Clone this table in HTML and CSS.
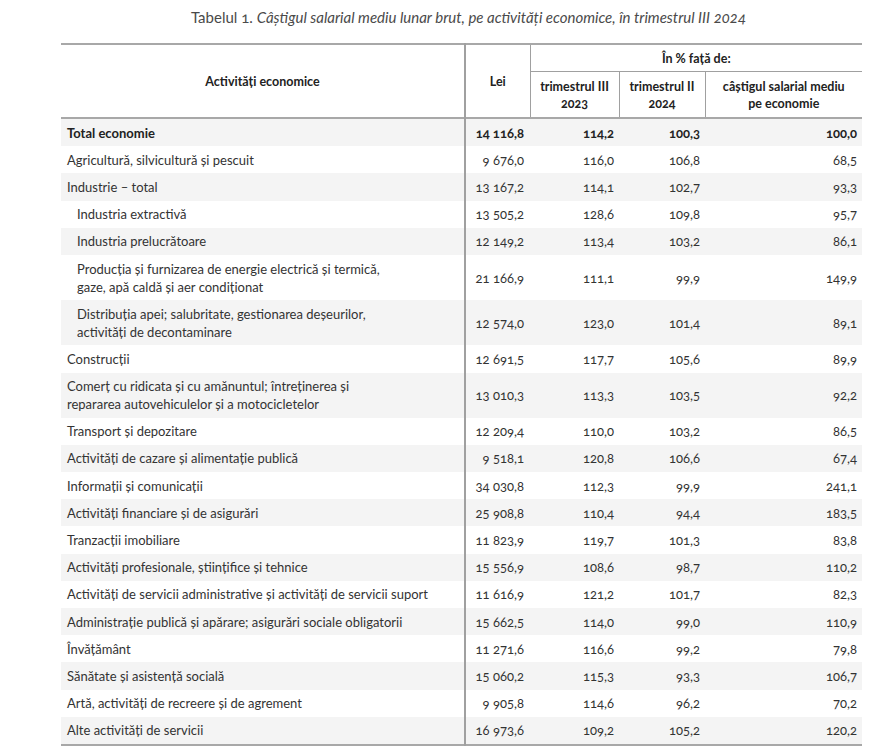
FILE: index.html
```html
<!DOCTYPE html>
<html lang="ro">
<head>
<meta charset="utf-8">
<title>Tabelul 1</title>
<link rel="stylesheet" href="styles.css">
</head>
<body>
<div class="page">
  <p class="caption">Tabelul 1. <em>Câștigul salarial mediu lunar brut, pe activități economice, în trimestrul III 2024</em></p>
  <table class="data">
    <colgroup>
      <col class="c-name"><col class="c-lei"><col class="c-t3"><col class="c-t2"><col class="c-ec">
    </colgroup>
    <thead>
      <tr class="h1">
        <th rowspan="2" class="h-name">Activități economice</th>
        <th rowspan="2" class="h-lei">Lei</th>
        <th colspan="3" class="h-group">În % față de:</th>
      </tr>
      <tr class="h2">
        <th>trimestrul III<br>2023</th>
        <th>trimestrul II<br>2024</th>
        <th class="h-last">câștigul salarial mediu<br>pe economie</th>
      </tr>
    </thead>
    <tbody>
      <tr class="total"><td>Total economie</td><td>14 116,8</td><td>114,2</td><td>100,3</td><td>100,0</td></tr>
      <tr><td>Agricultură, silvicultură și pescuit</td><td>9 676,0</td><td>116,0</td><td>106,8</td><td>68,5</td></tr>
      <tr><td>Industrie – total</td><td>13 167,2</td><td>114,1</td><td>102,7</td><td>93,3</td></tr>
      <tr class="sub"><td>Industria extractivă</td><td>13 505,2</td><td>128,6</td><td>109,8</td><td>95,7</td></tr>
      <tr class="sub"><td>Industria prelucrătoare</td><td>12 149,2</td><td>113,4</td><td>103,2</td><td>86,1</td></tr>
      <tr class="sub"><td>Producția și furnizarea de energie electrică și termică,<br>gaze, apă caldă și aer condiționat</td><td>21 166,9</td><td>111,1</td><td>99,9</td><td>149,9</td></tr>
      <tr class="sub"><td>Distribuția apei; salubritate, gestionarea deșeurilor,<br>activități de decontaminare</td><td>12 574,0</td><td>123,0</td><td>101,4</td><td>89,1</td></tr>
      <tr><td>Construcții</td><td>12 691,5</td><td>117,7</td><td>105,6</td><td>89,9</td></tr>
      <tr><td>Comerț cu ridicata și cu amănuntul; întreținerea și<br>repararea autovehiculelor și a motocicletelor</td><td>13 010,3</td><td>113,3</td><td>103,5</td><td>92,2</td></tr>
      <tr><td>Transport și depozitare</td><td>12 209,4</td><td>110,0</td><td>103,2</td><td>86,5</td></tr>
      <tr><td>Activități de cazare și alimentație publică</td><td>9 518,1</td><td>120,8</td><td>106,6</td><td>67,4</td></tr>
      <tr><td>Informații și comunicații</td><td>34 030,8</td><td>112,3</td><td>99,9</td><td>241,1</td></tr>
      <tr><td>Activități financiare și de asigurări</td><td>25 908,8</td><td>110,4</td><td>94,4</td><td>183,5</td></tr>
      <tr><td>Tranzacții imobiliare</td><td>11 823,9</td><td>119,7</td><td>101,3</td><td>83,8</td></tr>
      <tr><td>Activități profesionale, științifice și tehnice</td><td>15 556,9</td><td>108,6</td><td>98,7</td><td>110,2</td></tr>
      <tr><td>Activități de servicii administrative și activități de servicii suport</td><td>11 616,9</td><td>121,2</td><td>101,7</td><td>82,3</td></tr>
      <tr><td>Administrație publică și apărare; asigurări sociale obligatorii</td><td>15 662,5</td><td>114,0</td><td>99,0</td><td>110,9</td></tr>
      <tr><td>Învățământ</td><td>11 271,6</td><td>116,6</td><td>99,2</td><td>79,8</td></tr>
      <tr><td>Sănătate și asistență socială</td><td>15 060,2</td><td>115,3</td><td>93,3</td><td>106,7</td></tr>
      <tr><td>Artă, activități de recreere și de agrement</td><td>9 905,8</td><td>114,6</td><td>96,2</td><td>70,2</td></tr>
      <tr><td>Alte activități de servicii</td><td>16 973,6</td><td>109,2</td><td>105,2</td><td>120,2</td></tr>
    </tbody>
  </table>
</div>
</body>
</html>
```

FILE: styles.css
```css
html, body {
  margin: 0;
  padding: 0;
  background: #ffffff;
}

body {
  font-family: Lato, "Open Sans", "Liberation Sans", sans-serif;
  color: #333333;
  font-variant-numeric: oldstyle-nums;
}

.page {
  width: 801px;
  padding: 0 0 0 61px;
}

.caption {
  margin: 0;
  padding-top: 7px;
  height: 20px;
  line-height: 20px;
  font-size: 15px;
  color: #4a4a4a;
  text-align: center;
  margin-left: 14px;
  margin-bottom: 16px;
}

.caption em {
  font-style: italic;
}

.data {
  width: 801px;
  border-collapse: collapse;
  table-layout: fixed;
  font-size: 13px;
}

.c-name { width: 404px; }
.c-lei { width: 65px; }
.c-t3 { width: 89px; }
.c-t2 { width: 86px; }
.c-ec { width: 157px; }

.data thead {
  border-top: 2px solid #a8a8a8;
  border-bottom: 2px solid #a8a8a8;
}

.data th {
  font-weight: 700;
  color: #222222;
  font-size: 12.5px;
  line-height: 17px;
  text-align: center;
  vertical-align: middle;
  border-left: 1px solid #a0a0a0;
  padding: 0 4px;
}

.data th.h-name {
  border-left: none;
}

.data .h-lei {
  border-left: 2px solid #a0a0a0;
}

.data .h1 th.h-group {
  height: 26px;
  border-bottom: 1px solid #a0a0a0;
}

.data .h2 th {
  height: 45px;
}

.data td {
  padding: 4.6px 5px;
  line-height: 18px;
  text-align: right;
  vertical-align: middle;
  white-space: nowrap;
}

.data td:first-child {
  text-align: left;
  padding-left: 6px;
  border-right: 2px solid #a0a0a0;
}

.data tr.sub td:first-child {
  padding-left: 16px;
}

.data td:nth-child(2) {
  padding-right: 6px;
}

.data tbody tr:nth-child(odd) {
  background: #f4f4f4;
}

.data tr.total td {
  font-weight: 700;
  color: #222222;
}

.data tbody {
  border-bottom: 2px solid #a8a8a8;
}
```
